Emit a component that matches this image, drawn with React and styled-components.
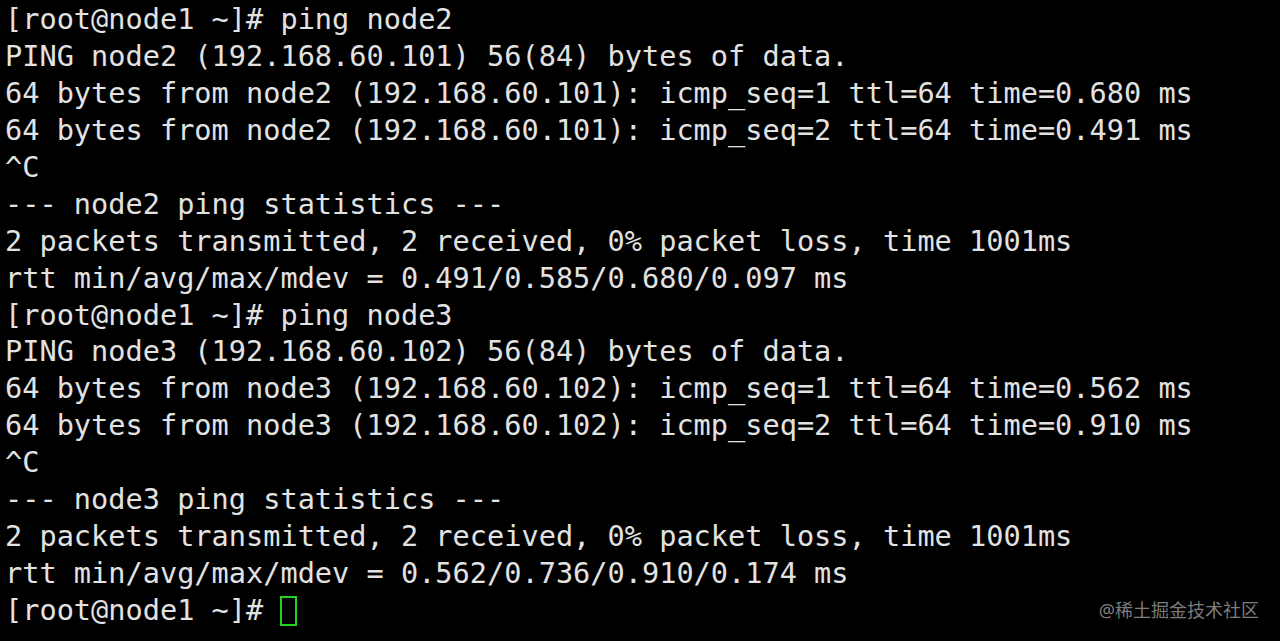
import styled, { createGlobalStyle } from 'styled-components';

const GlobalStyle = createGlobalStyle`
    html, body {
        margin: 0;
        padding: 0;
        background: #000;
    }
`;

const lines = [
    '[root@node1 ~]# ping node2',
    'PING node2 (192.168.60.101) 56(84) bytes of data.',
    '64 bytes from node2 (192.168.60.101): icmp_seq=1 ttl=64 time=0.680 ms',
    '64 bytes from node2 (192.168.60.101): icmp_seq=2 ttl=64 time=0.491 ms',
    '^C',
    '--- node2 ping statistics ---',
    '2 packets transmitted, 2 received, 0% packet loss, time 1001ms',
    'rtt min/avg/max/mdev = 0.491/0.585/0.680/0.097 ms',
    '[root@node1 ~]# ping node3',
    'PING node3 (192.168.60.102) 56(84) bytes of data.',
    '64 bytes from node3 (192.168.60.102): icmp_seq=1 ttl=64 time=0.562 ms',
    '64 bytes from node3 (192.168.60.102): icmp_seq=2 ttl=64 time=0.910 ms',
    '^C',
    '--- node3 ping statistics ---',
    '2 packets transmitted, 2 received, 0% packet loss, time 1001ms',
    'rtt min/avg/max/mdev = 0.562/0.736/0.910/0.174 ms',
];

const App = () => {
    return (
        <>
            <GlobalStyle />
            <Terminal>
                {lines.map((l, i) => (
                    <Line key={`line${i}`}>{l}</Line>
                ))}
                <Line>
                    {'[root@node1 ~]# '}
                    <Cursor />
                </Line>
                <Watermark>@稀土掘金技术社区</Watermark>
            </Terminal>
        </>
    );
}

const Terminal = styled.div`
    position: relative;
    width: 1280px;
    height: 641px;
    box-sizing: border-box;
    padding: 1px 0 0 5px;
    background: #000;
    overflow: hidden;
`;

const Line = styled.div`
    height: 36.95px;
    line-height: 36.95px;
    white-space: pre;
    font-family: "DejaVu Sans Mono", "Liberation Mono", monospace;
    font-size: 28.6px;
    color: #e2e2e2;
`;

const Cursor = styled.span`
    display: inline-block;
    box-sizing: border-box;
    width: 17px;
    height: 30px;
    vertical-align: -6px;
    border: 2px solid #1ed41e;
`;

const Watermark = styled.div`
    position: absolute;
    right: 21px;
    bottom: 19px;
    font-family: "Noto Sans", "Noto Sans CJK SC", sans-serif;
    font-size: 18px;
    color: #7c7c7c;
`;

export default App;
